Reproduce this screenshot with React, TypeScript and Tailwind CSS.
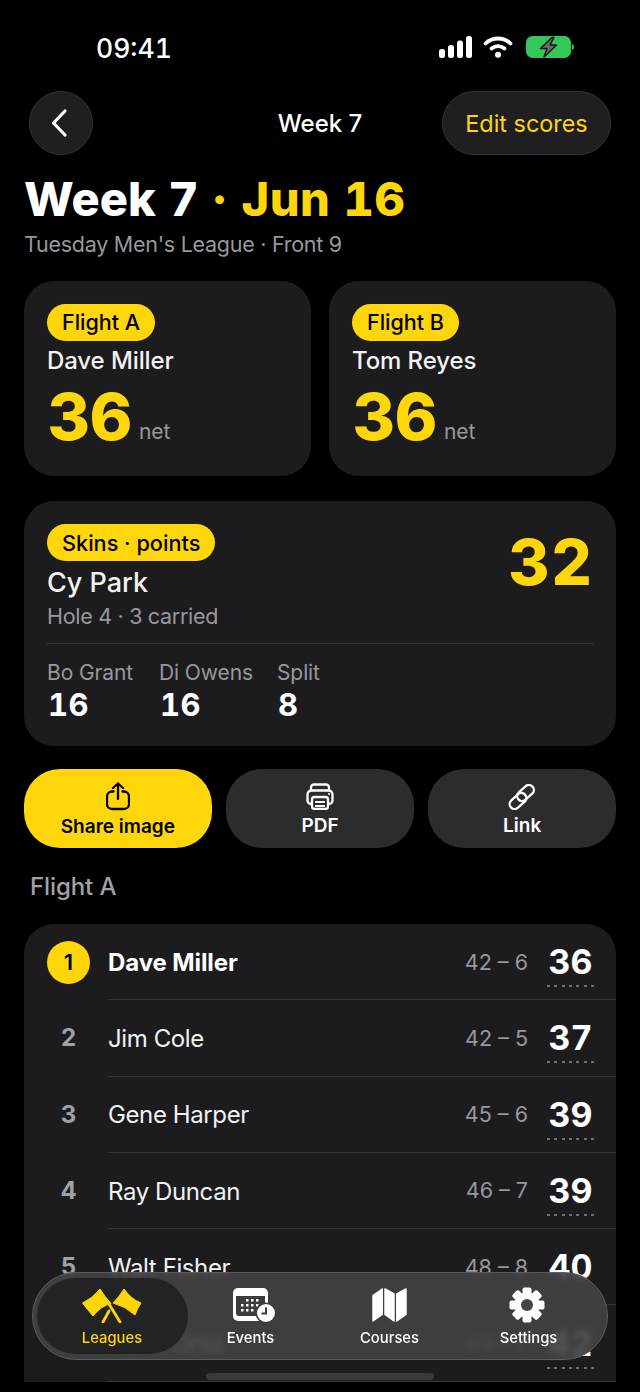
import React from "react";

const Y = "#ffd60a";

function Signal() {
  return (
    <svg width="33" height="22" viewBox="0 0 33 22" fill="#fff">
      <rect x="0" y="13" width="6" height="9" rx="2.500" />
      <rect x="9" y="9" width="6" height="13" rx="2.500" />
      <rect x="18" y="4.500" width="6" height="17.500" rx="2.500" />
      <rect x="27" y="0" width="6" height="22" rx="2.500" />
    </svg>
  );
}
function Wifi() {
  return (
    <svg width="30" height="22" viewBox="0 0 30 22" fill="none" stroke="#fff" strokeWidth="3.800" strokeLinecap="round">
      <path d="M2.500 7.500C9.500 .8 20.500 .8 27.500 7.500" />
      <path d="M8.500 12.500C12.300 9.300 17.700 9.300 21.500 12.500" />
      <circle cx="15" cy="18.800" r="3" fill="#fff" stroke="none" />
    </svg>
  );
}
function Battery() {
  return (
    <svg width="48" height="22" viewBox="0 0 48 22">
      <rect x="0" y="0" width="45" height="22" rx="6.500" fill="#34c759" />
      <path d="M46 8c1.400.5 2 1.600 2 3s-.6 2.500-2 3z" fill="#34c759" />
      <path d="M26 1.500 14.500 12.500H21L18 21 30.500 9H24L28 1.500z" fill="#6d6d70" stroke="#141414" strokeWidth="1.500" strokeLinejoin="round" />
    </svg>
  );
}

function FlightCard({ tag, name }: { tag: string; name: string }) {
  return (
    <div className="flex-1 h-[195px] rounded-[30px] bg-[#1c1c1e] pt-[23px] pl-[23px]">
      <div className="w-fit h-[37px] rounded-full bg-[#ffd60a] px-[15px] flex items-center text-[21.500px] font-medium text-black">{tag}</div>
      <div className="mt-[2px] text-[24px] leading-[35px] font-medium tracking-[-0.1px] text-[#f2f2f2]">{name}</div>
      <div className="mt-[4px] flex items-baseline gap-[7px] pl-[1px]">
        <span className="text-[65px] leading-[70px] font-extrabold tabular-nums text-[#ffd60a]">36</span>
        <span className="text-[21px] leading-[20px] relative -top-[1px] text-[#98989d]">net</span>
      </div>
    </div>
  );
}

function Stat({ label, value, w }: { label: string; value: string; w: string }) {
  return (
    <div className={w}>
      <div className="text-[21px] leading-[29px] tracking-[-0.1px] text-[#98989d]">{label}</div>
      <div className="text-[31px] leading-[35px] font-bold tabular-nums tracking-[0.5px] text-white pl-[1px]">{value}</div>
    </div>
  );
}

function Row({ rank, name, gross, net, first, last }: { rank: string; name: string; gross: string; net: string; first?: boolean; last?: boolean }) {
  return (
    <div className="h-[76.300px] flex items-stretch">
      <div className="w-[84px] flex items-center pl-[23px] shrink-0">
        {first ? (
          <div className="w-[43px] h-[43px] rounded-full bg-[#ffd60a] flex items-center justify-center text-[22px] font-semibold text-black">{rank}</div>
        ) : (
          <div className="w-[43px] text-center text-[24px] font-bold text-[#a1a1a6]">{rank}</div>
        )}
      </div>
      <div className={"flex-1 flex items-center pr-[22px] " + (last ? "" : "border-b border-[#38383a]")}>
        <div className={"flex-1 pt-[2px] " + (first ? "text-[24px] font-bold text-white tracking-[-0.1px]" : "text-[24px] font-normal text-[#f2f2f2] tracking-[-0.4px]")}>{name}</div>
        <div className="text-[21.500px] text-[#98989d] mr-[19px]">{gross}</div>
        <div className="relative w-[47px] pt-[1px] text-center text-[34px] leading-[40px] font-bold tabular-nums text-white">
          {net}
          <div className="absolute left-0 right-0 -bottom-[5px] flex justify-between">
            {[0, 1, 2, 3, 4, 5, 6].map((i) => (
              <span key={i} className="w-[3px] h-[2px] bg-[#6e6e73]" />
            ))}
          </div>
        </div>
      </div>
    </div>
  );
}

function Action({ label, primary, children, lift }: { label: string; primary?: boolean; children: React.ReactNode; lift?: boolean }) {
  return (
    <div className={"flex-1 h-[79px] rounded-[36px] flex flex-col items-center pt-[13px] " + (primary ? "bg-[#ffd60a] text-black" : "bg-[#2c2c2e] text-white")}>
      <div className="h-[29px] flex items-center justify-center">{children}</div>
      <div className={"text-[19px] leading-[28px] font-semibold " + (lift ? "mt-[1px]" : "mt-[2px]")}>{label}</div>
    </div>
  );
}

function Tab({ label, active, children }: { label: string; active?: boolean; children: React.ReactNode }) {
  return (
    <div className={"flex flex-col items-center " + (active ? "w-[138px] text-[#ffd60a]" : "w-[139px] text-white")}>
      <div className="h-[48px] flex items-center justify-center pt-[3px]">{children}</div>
      <div className="text-[14.800px] leading-[20px] font-medium">{label}</div>
    </div>
  );
}

export default function App() {
  const teeth = [0, 45, 90, 135, 180, 225, 270, 315];
  return (
    <div className="relative w-[640px] h-[1392px] overflow-hidden bg-black text-white" style={{ fontFamily: "Inter, sans-serif" }}>
      {/* status bar */}
      <div className="h-[91px] flex items-start justify-between pt-[33px] pl-[96px] pr-[66px]">
        <div className="text-[26.500px] leading-[30px] font-medium tabular-nums">09:41</div>
        <div className="flex items-center pt-[3px]">
          <Signal />
          <span className="w-[11px]" />
          <Wifi />
          <span className="w-[13px]" />
          <Battery />
        </div>
      </div>

      {/* nav */}
      <div className="relative h-[64px] flex items-center justify-between pl-[29px] pr-[29px]">
        <div className="w-[64px] h-[64px] rounded-full bg-[#1f1f21] border border-[#333336] flex items-center justify-center">
          <svg width="22" height="32" viewBox="0 0 22 32" fill="none" stroke="#fff" strokeWidth="3.200" strokeLinecap="round" strokeLinejoin="round">
            <path d="M15 4 3.500 16 15 28" />
          </svg>
        </div>
        <div className="absolute left-0 right-0 text-center text-[24px] font-medium pt-[1px]">Week 7</div>
        <div className="relative w-[169px] h-[64px] rounded-full bg-[#1f1f21] border border-[#333336] flex items-center justify-center text-[23.400px] pt-[1px] text-[#ffd60a]">Edit scores</div>
      </div>

      {/* title */}
      <div className="pl-[24px] mt-[14px] text-[47px] leading-[60px] font-extrabold tabular-nums whitespace-nowrap">
        Week 7 <span className="text-[#ffd60a] tracking-[0.5px]">· Jun 16</span>
      </div>
      <div className="pl-[24px] text-[21.500px] leading-[30px] tracking-[-0.27px] text-[#98989d]">Tuesday Men's League · Front 9</div>

      {/* flight cards */}
      <div className="mx-[24px] mt-[22px] flex gap-[18px]">
        <FlightCard tag="Flight A" name="Dave Miller" />
        <FlightCard tag="Flight B" name="Tom Reyes" />
      </div>

      {/* skins */}
      <div className="mx-[24px] mt-[25px] h-[245px] rounded-[30px] bg-[#1c1c1e] px-[23px] pt-[23px]">
        <div className="flex justify-between">
          <div>
            <div className="w-fit h-[37px] rounded-full bg-[#ffd60a] px-[15px] pt-[1px] flex items-center text-[21.700px] font-medium text-black">Skins · points</div>
            <div className="mt-[4px] text-[27px] leading-[36px] font-medium text-[#f2f2f2]">Cy Park</div>
            <div className="text-[21.500px] leading-[31px] tracking-[-0.3px] text-[#98989d]">Hole 4 · 3 carried</div>
          </div>
          <div className="text-[63px] leading-[76px] font-extrabold tabular-nums tracking-[2px] -mr-[1px] text-[#ffd60a]">32</div>
        </div>
        <div className="mt-[11px] border-t border-[#38383a] pt-[14px] flex">
          <Stat label="Bo Grant" value="16" w="w-[112px]" />
          <Stat label="Di Owens" value="16" w="w-[118px]" />
          <Stat label="Split" value="8" w="w-[80px]" />
        </div>
      </div>

      {/* actions */}
      <div className="mx-[24px] mt-[23px] flex gap-[14.500px]">
        <Action label="Share image" primary>
          <svg width="24" height="29" viewBox="0 0 24 29" fill="none" stroke="#000" strokeWidth="2.300" strokeLinecap="round" strokeLinejoin="round">
            <path d="M12 17V1.500M7 6l5-4.500L17 6" />
            <path d="M7.500 9.500H6a5 5 0 0 0-5 5V22a5 5 0 0 0 5 5h12a5 5 0 0 0 5-5v-7.500a5 5 0 0 0-5-5h-1.500" />
          </svg>
        </Action>
        <Action label="PDF" lift>
          <svg width="28" height="27" viewBox="0 0 28 27" fill="none" stroke="#fff" strokeWidth="2.300" strokeLinejoin="round">
            <path d="M5 8V4.500a3 3 0 0 1 3-3h12a3 3 0 0 1 3 3V8" />
            <path d="M6 21H5a3.500 3.500 0 0 1-3.500-3.500v-6A4 4 0 0 1 5.500 7.500h17a4 4 0 0 1 4 4v6A3.500 3.500 0 0 1 23 21h-1" />
            <rect x="6" y="14" width="16" height="12" rx="2.500" />
            <path d="M9 19h10M9 23h10" strokeWidth="1.800" />
            <circle cx="23" cy="11" r="1.100" fill="#fff" stroke="none" />
          </svg>
        </Action>
        <Action label="Link" lift>
          <svg width="28" height="26" viewBox="0 0 28 26" fill="none" stroke="#fff" strokeWidth="2.300">
            <rect x="8" y="4" width="19" height="10" rx="5" transform="rotate(-42 17.500 9)" />
            <rect x="0.500" y="12" width="19" height="10" rx="5" transform="rotate(-42 10 17)" />
          </svg>
        </Action>
      </div>

      <div className="pl-[30px] mt-[24px] text-[24px] leading-[30px] font-medium tracking-[-0.1px] text-[#a1a1a6]">Flight A</div>

      {/* list */}
      <div className="mx-[24px] mt-[22px] rounded-t-[30px] bg-[#1c1c1e]">
        <Row first rank="1" name="Dave Miller" gross="42 – 6" net="36" />
        <Row rank="2" name="Jim Cole" gross="42 – 5" net="37" />
        <Row rank="3" name="Gene Harper" gross="45 – 6" net="39" />
        <Row rank="4" name="Ray Duncan" gross="46 – 7" net="39" />
        <Row rank="5" name="Walt Fisher" gross="48 – 8" net="40" />
        <Row rank="6" name="Hank Ortiz" gross="49 – 7" net="42" />
      </div>

      {/* tab bar */}
      <div className="absolute left-[32px] top-[1272px] w-[576px] h-[88px] rounded-full border border-[#5c5c60] bg-[#424244]/90 backdrop-blur-[3px] flex items-center pl-[11px] pr-[6px]">
        <div className="absolute left-[4px] top-[5px] w-[151px] h-[76px] rounded-full bg-[#222224]/95" />
        <div className="relative flex w-full -ml-[1px] -mt-[5px]">
          <Tab label="Leagues" active>
            <svg width="60" height="35" viewBox="0 0 60 35" fill={Y} stroke={Y} strokeLinejoin="round">
              <path d="M.5 15Q11 10 18 1Q23 9 29 15.500Q19 18 11 28Q5 21 .5 15z" />
              <path d="M59 15Q49 11 42 1Q37 9 31 15Q43 18 53 27Q55 21 59 15z" />
              <path d="M27 16 38 34M27 23 21 34" fill="none" strokeWidth="2.800" strokeLinecap="round" />
            </svg>
          </Tab>
          <Tab label="Events">
            <svg className="ml-[8px]" width="43" height="34" viewBox="0 0 43 34">
              <path d="M5 0h25a5 5 0 0 1 5 5v28H5a5 5 0 0 1-5-5V5a5 5 0 0 1 5-5z" fill="#fff" />
              <path d="M3 8h29v20H6a3 3 0 0 1-3-3z" fill="#3c3c3e" />
              <g fill="#fff">
                <rect x="13" y="11" width="2.500" height="2.500" /><rect x="18" y="11" width="2.500" height="2.500" /><rect x="23" y="11" width="2.500" height="2.500" />
                <rect x="8" y="16" width="2.500" height="2.500" /><rect x="13" y="16" width="2.500" height="2.500" /><rect x="18" y="16" width="2.500" height="2.500" /><rect x="23" y="16" width="2.500" height="2.500" />
                <rect x="8" y="21" width="2.500" height="2.500" /><rect x="13" y="21" width="2.500" height="2.500" /><rect x="18" y="21" width="2.500" height="2.500" />
              </g>
              <circle cx="33" cy="25" r="10.500" fill="#3c3c3e" />
              <circle cx="33" cy="25" r="9" fill="#fff" />
              <path d="M33 19.500v6h-4.500" fill="none" stroke="#3c3c3e" strokeWidth="2" />
            </svg>
          </Tab>
          <Tab label="Courses">
            <svg width="35" height="34" viewBox="0 0 35 34" fill="#fff" stroke="#fff" strokeWidth="1.500" strokeLinejoin="round">
              <path d="M1 7.500 10.200 1v25.500L1 33z" />
              <path d="M13 1l9 5v27l-9-6.500z" />
              <path d="M24.800 6 34 1v25.500L24.800 33z" />
            </svg>
          </Tab>
          <Tab label="Settings">
            <svg className="mr-[3px]" width="36" height="36" viewBox="0 0 36 36">
              <circle cx="18" cy="18" r="12.500" fill="#fff" />
              {teeth.map((a) => (
                <rect key={a} x="13.500" y="0.500" width="9" height="9" rx="2" fill="#fff" transform={`rotate(${a} 18 18)`} />
              ))}
              <circle cx="18" cy="18" r="6" fill="#46464a" />
            </svg>
          </Tab>
        </div>
      </div>

      {/* home indicator */}
      <div className="absolute left-[206px] top-[1373px] w-[228px] h-[7px] rounded-full bg-[#3a3a3c]" />
    </div>
  );
}
